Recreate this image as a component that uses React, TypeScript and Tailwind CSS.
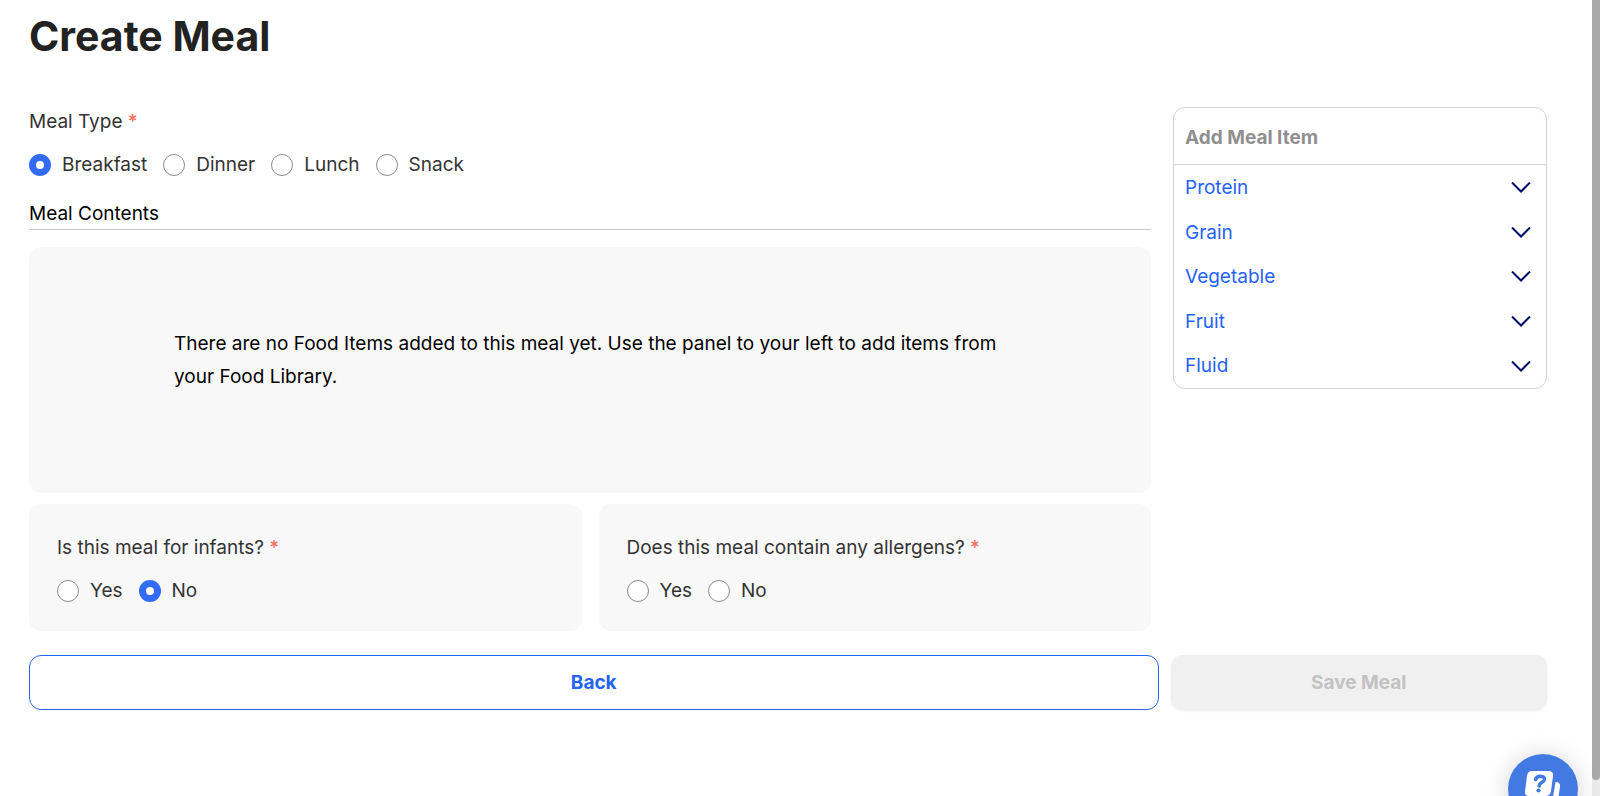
import { useState } from 'react';

const MEAL_TYPES = ['Breakfast', 'Dinner', 'Lunch', 'Snack'];
const FOOD_GROUPS = ['Protein', 'Grain', 'Vegetable', 'Fruit', 'Fluid'];

interface RadioGroupProps {
  name: string;
  label: string;
  options: string[];
  value: string;
  onChange: (value: string) => void;
}

function RadioGroup({ name, label, options, value, onChange }: RadioGroupProps) {
  return (
    <fieldset className="text-[#333333]">
      <legend className="leading-[30px]">
        {label} <span className="font-medium text-[#ff6b5e]">*</span>
      </legend>
      <div className="flex flex-wrap gap-4 pt-[14px]">
        {options.map((option) => (
          <label key={option} className="flex items-center gap-[11px] leading-7">
            <input
              type="radio"
              name={name}
              value={option}
              checked={value === option}
              onChange={() => onChange(option)}
              className="size-[22px] shrink-0 appearance-none rounded-full border border-[#8c8c8c] bg-white checked:border-[7px] checked:border-[#316bf6]"
            />
            {option}
          </label>
        ))}
      </div>
    </fieldset>
  );
}

function MealItemPanel() {
  return (
    <aside className="self-start rounded-xl border border-[#d4d4d4]">
      <h2 className="border-b border-[#d4d4d4] px-[11px] pb-3 pt-4 font-bold leading-7 text-[#8f8f8f]">
        Add Meal Item
      </h2>
      <ul className="flex h-[223px] flex-col">
        {FOOD_GROUPS.map((group) => (
          <li key={group} className="flex-1">
            <button
              type="button"
              className="flex h-full w-full items-center justify-between pl-[11px] pr-[15px] pt-0.5 text-[#2563f5]"
            >
              {group}
              <svg className="h-3 w-5" viewBox="0 0 20 12" fill="none" stroke="#06106b" strokeWidth={2} aria-hidden="true">
                <path d="M1 0.500l9 9 9-9" />
              </svg>
            </button>
          </li>
        ))}
      </ul>
    </aside>
  );
}

function HelpButton() {
  return (
    <button
      type="button"
      aria-label="Help"
      className="fixed -bottom-7 right-[22px] size-[70px] rounded-full bg-[#4379e3] shadow-[0_2px_24px_rgba(0,0,0,0.18)]"
    >
      <svg viewBox="0 0 70 70" className="size-full" fill="none" aria-hidden="true">
        <path
          d="M24 17h16.500q5 0 4.500 5l-2 15q-.600 5-5.500 5H21q-4.500 0-4-4.500l2-15.500q.600-5 5-5z"
          fill="#fff"
        />
        <path d="M47.500 28q5 0 4.500 4.500l-2 14.500q-.500 4-4 4H30q-3 0-3-4h14q3.500 0 4-4z" fill="#fff" />
        <path
          d="M27.500 25.500q1.300-3.300 5-3.300 4.200.300 3.900 3.300-.300 2-2.900 3.200-2.100 1-2.400 3.300"
          stroke="#4379e3"
          strokeWidth={3.500}
          strokeLinecap="round"
        />
        <circle cx="30.500" cy="36.500" r="2.100" fill="#4379e3" />
      </svg>
    </button>
  );
}

export default function App() {
  const [mealType, setMealType] = useState('Breakfast');
  const [forInfants, setForInfants] = useState('No');
  const [hasAllergens, setHasAllergens] = useState('');

  return (
    <div className="flex h-screen overflow-hidden bg-white font-['Inter',sans-serif] text-[19px] text-black">
      <main className="flex-1 pl-[29px] pr-[45px]">
        <h1 className="pt-[11px] text-[41px] font-bold leading-[50px] text-[#222222]">Create Meal</h1>

        <div className="mt-[46px] grid grid-cols-[3fr_1fr] gap-[22px]">
          <div>
            <RadioGroup name="meal-type" label="Meal Type" options={MEAL_TYPES} value={mealType} onChange={setMealType} />

            <h2 className="mt-5 border-b border-[#cccccc] leading-[30px]">Meal Contents</h2>

            <div className="mt-[17px] flex h-[246px] items-start rounded-xl bg-[#f8f8f8] px-[145px] pt-20">
              <p className="leading-[33px]">
                There are no Food Items added to this meal yet. Use the panel to your left to add items from
                your Food Library.
              </p>
            </div>

            <div className="mt-[11px] grid grid-cols-2 gap-[17px]">
              <div className="rounded-xl bg-[#f8f8f8] px-7 pb-[26px] pt-[29px]">
                <RadioGroup
                  name="infants"
                  label="Is this meal for infants?"
                  options={['Yes', 'No']}
                  value={forInfants}
                  onChange={setForInfants}
                />
              </div>
              <div className="rounded-xl bg-[#f8f8f8] px-7 pb-[26px] pt-[29px]">
                <RadioGroup
                  name="allergens"
                  label="Does this meal contain any allergens?"
                  options={['Yes', 'No']}
                  value={hasAllergens}
                  onChange={setHasAllergens}
                />
              </div>
            </div>
          </div>

          <MealItemPanel />
        </div>

        <div className="mt-6 grid grid-cols-[3fr_1fr] gap-3">
          <button type="button" className="h-[55px] rounded-xl border border-[#2563f5] pt-0.5 font-bold text-[#2563f5]">
            Back
          </button>
          <button
            type="button"
            disabled
            className="h-[55px] rounded-xl bg-[#f0f0f0] pt-0.5 font-bold text-[#c2c2c2] shadow-[0_1px_3px_rgba(0,0,0,0.08)]"
          >
            Save Meal
          </button>
        </div>
      </main>

      <div className="w-2 bg-[#ebebeb]">
        <div className="h-[98%] rounded-b-lg bg-[#a9a9a9]" />
      </div>

      <HelpButton />
    </div>
  );
}
